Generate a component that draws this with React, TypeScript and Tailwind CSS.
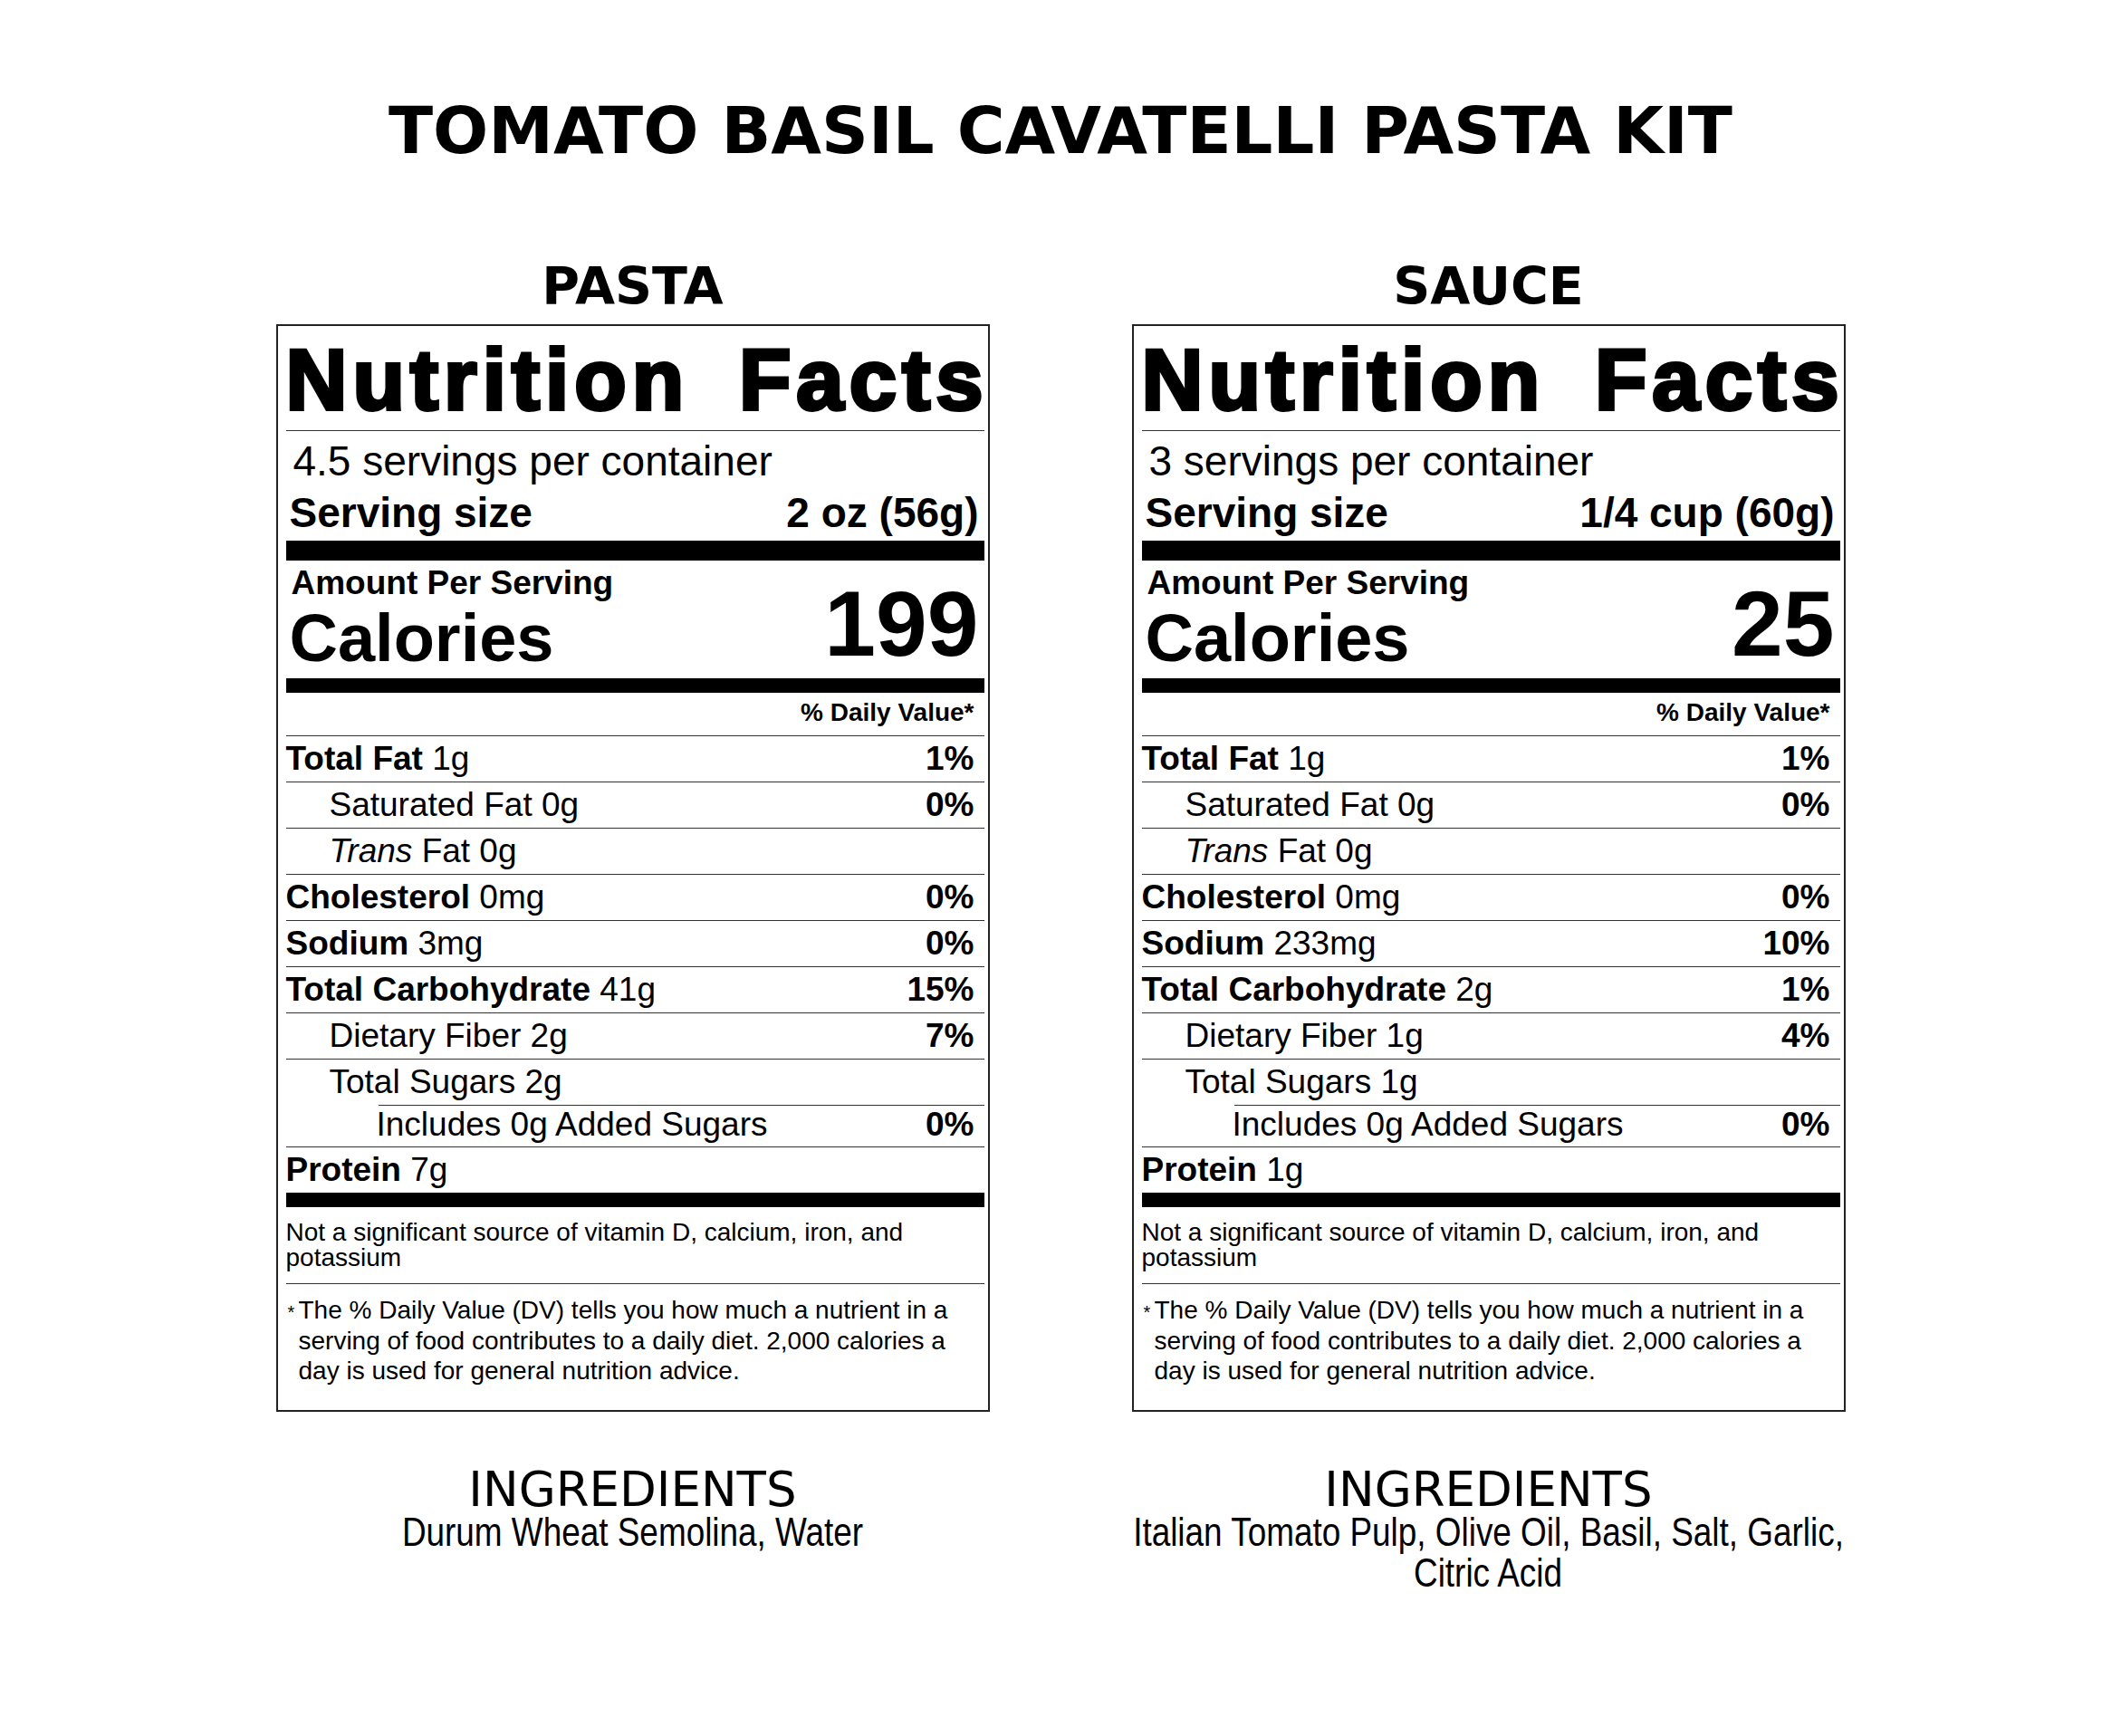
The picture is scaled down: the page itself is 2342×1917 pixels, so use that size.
type Nutrient = {
  name: string;
  amount: string;
  dv?: string;
  bold?: boolean;
  indent?: 0 | 1 | 2;
  italic?: string;
};

type Panel = {
  title: string;
  servings: string;
  servingSize: string;
  calories: string;
  nutrients: Nutrient[];
  ingredients: string[];
};

const PANELS: Panel[] = [
  {
    title: "PASTA",
    servings: "4.5 servings per container",
    servingSize: "2 oz (56g)",
    calories: "199",
    nutrients: [
      { name: "Total Fat", amount: "1g", dv: "1%", bold: true },
      { name: "Saturated Fat", amount: "0g", dv: "0%", indent: 1 },
      { name: "Fat", italic: "Trans", amount: "0g", indent: 1 },
      { name: "Cholesterol", amount: "0mg", dv: "0%", bold: true },
      { name: "Sodium", amount: "3mg", dv: "0%", bold: true },
      { name: "Total Carbohydrate", amount: "41g", dv: "15%", bold: true },
      { name: "Dietary Fiber", amount: "2g", dv: "7%", indent: 1 },
      { name: "Total Sugars", amount: "2g", indent: 1 },
      { name: "Includes 0g Added Sugars", amount: "", dv: "0%", indent: 2 },
      { name: "Protein", amount: "7g", bold: true },
    ],
    ingredients: ["Durum Wheat Semolina, Water"],
  },
  {
    title: "SAUCE",
    servings: "3 servings per container",
    servingSize: "1/4 cup (60g)",
    calories: "25",
    nutrients: [
      { name: "Total Fat", amount: "1g", dv: "1%", bold: true },
      { name: "Saturated Fat", amount: "0g", dv: "0%", indent: 1 },
      { name: "Fat", italic: "Trans", amount: "0g", indent: 1 },
      { name: "Cholesterol", amount: "0mg", dv: "0%", bold: true },
      { name: "Sodium", amount: "233mg", dv: "10%", bold: true },
      { name: "Total Carbohydrate", amount: "2g", dv: "1%", bold: true },
      { name: "Dietary Fiber", amount: "1g", dv: "4%", indent: 1 },
      { name: "Total Sugars", amount: "1g", indent: 1 },
      { name: "Includes 0g Added Sugars", amount: "", dv: "0%", indent: 2 },
      { name: "Protein", amount: "1g", bold: true },
    ],
    ingredients: [
      "Italian Tomato Pulp, Olive Oil, Basil, Salt, Garlic,",
      "Citric Acid",
    ],
  },
];

function NutrientRow({ item }: { item: Nutrient }) {
  const indent =
    item.indent === 2 ? "pl-[100px]" : item.indent === 1 ? "pl-[48px]" : "";
  const height =
    item.indent === 2 ? "leading-[41px] pb-[4px]" : "leading-[50px]";

  return (
    <div className={`flex justify-between pr-[11px] text-[37px] ${height}`}>
      <span className={indent}>
        {item.italic && <i>{item.italic} </i>}
        {item.bold ? <b>{item.name}</b> : item.name}
        {item.amount && ` ${item.amount}`}
      </span>
      {item.dv && <b>{item.dv}</b>}
    </div>
  );
}

function Label({ panel }: { panel: Panel }) {
  return (
    <div className="w-[788px] border-2 border-[#222] pb-[26px] pl-[9px] pr-[4px] pt-[13px] font-['Liberation_Sans',Arial,sans-serif] text-black">
      {/* Heading */}
      <div className="flex justify-between text-[94px] font-bold leading-[94px] tracking-[6px] [-webkit-text-stroke:4px_#000]">
        <span>Nutrition</span>
        <span className="-mr-[5px]">Facts</span>
      </div>
      <div className="mt-[8px] h-px bg-[#333]" />

      {/* Servings */}
      <p className="mt-[10px] pl-[8px] text-[46px] leading-[46px]">
        {panel.servings}
      </p>
      <div className="mt-[11px] flex justify-between pl-[4px] pr-[6px] text-[46px] font-bold leading-[46px]">
        <span>Serving size</span>
        <span>{panel.servingSize}</span>
      </div>
      <div className="mt-[8px] h-[22px] bg-black" />

      {/* Calories */}
      <div className="flex items-end justify-between pt-[6px]">
        <div className="flex flex-col font-bold">
          <span className="pl-[6px] text-[37px] leading-[37px]">
            Amount Per Serving
          </span>
          <span className="mb-[7px] mt-[6px] pl-[4px] text-[74px] leading-[74px]">
            Calories
          </span>
        </div>
        <span className="mb-[9px] pr-[6px] text-[102px] font-bold leading-[102px]">
          {panel.calories}
        </span>
      </div>
      <div className="h-[16px] bg-black" />

      <p className="mt-[8px] pr-[11px] text-right text-[28px] font-bold leading-[28px]">
        % Daily Value*
      </p>
      <div className="mt-[11px] h-px bg-[#333]" />

      {/* Nutrients */}
      {panel.nutrients.map((item, index) => {
        const next = panel.nutrients[index + 1];
        const last = index === panel.nutrients.length - 1;
        return (
          <div key={item.name + index}>
            <NutrientRow item={item} />
            {!last && (
              <div
                className={`h-px bg-[#333] ${next?.indent === 2 ? "ml-[102px]" : ""}`}
              />
            )}
          </div>
        );
      })}
      <div className="h-[16px] bg-black" />

      {/* Footnotes */}
      <p className="mt-[14px] text-[28px] leading-[28px]">
        Not a significant source of vitamin D, calcium, iron, and
        <br />
        potassium
      </p>
      <div className="mt-[14px] h-px bg-[#333]" />
      <div className="mt-[12px] flex text-[28px] leading-[33.5px]">
        <span className="w-[14px] shrink-0 pl-[2px] pt-[3px] text-[20px]">*</span>
        <p>
          The % Daily Value (DV) tells you how much a nutrient in a
          <br />
          serving of food contributes to a daily diet. 2,000 calories a
          <br />
          day is used for general nutrition advice.
        </p>
      </div>
    </div>
  );
}

export default function App() {
  return (
    <div className="min-h-screen w-full bg-white pt-[108px] text-black">
      <h1 className="text-center font-['DejaVu_Sans',sans-serif] text-[72px] font-bold leading-[72px]">
        TOMATO BASIL CAVATELLI PASTA KIT
      </h1>

      <div className="mt-[108px] flex justify-center gap-[157px]">
        {PANELS.map((panel) => (
          <div key={panel.title} className="flex w-[788px] flex-col items-center">
            <h2 className="font-['DejaVu_Sans',sans-serif] text-[57px] font-bold leading-[57px]">
              {panel.title}
            </h2>
            <div className="mt-[13px]">
              <Label panel={panel} />
            </div>

            {/* Ingredients */}
            <h3 className="mt-[61px] font-['DejaVu_Sans',sans-serif] text-[53px] leading-[50px]">
              INGREDIENTS
            </h3>
            <div className="-mt-px flex flex-col items-center font-['Liberation_Sans',Arial,sans-serif] text-[45px] leading-[45px]">
              {panel.ingredients.map((line) => (
                <span key={line} className="scale-x-[0.82] whitespace-nowrap">
                  {line}
                </span>
              ))}
            </div>
          </div>
        ))}
      </div>
    </div>
  );
}
